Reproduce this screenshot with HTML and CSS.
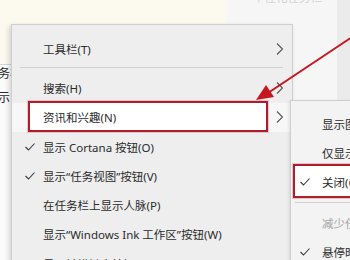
FILE: index.html
```html
<!DOCTYPE html>
<html>
<head>
<meta charset="utf-8">
<link rel="stylesheet" href="styles.css">
</head>
<body>

<div class="desk">
  <div class="pane-left">
    <div class="strip">
      <p class="cut">务栏</p>
      <p class="cut">示</p>
    </div>
  </div>
  <div class="pane-right">
    <p class="faint">个性化任务栏</p>
  </div>
  <div class="pane-edge"></div>
</div>

<!-- context menu -->
<div class="menu main">
  <div class="item"><span class="tick"></span><span class="label">工具栏(T)</span><svg class="arrow" width="7" height="12" viewBox="0 0 7 12"><polyline points="1,0.5 6.5,6 1,11.5"/></svg></div>
  <div class="sep"></div>
  <div class="item"><span class="tick"></span><span class="label">搜索(H)</span><svg class="arrow" width="7" height="12" viewBox="0 0 7 12"><polyline points="1,0.5 6.5,6 1,11.5"/></svg></div>
  <div class="item hot mark"><span class="tick"></span><span class="label">资讯和兴趣(N)</span><svg class="arrow" width="7" height="12" viewBox="0 0 7 12"><polyline points="1,0.5 6.5,6 1,11.5"/></svg></div>
  <div class="item"><span class="tick"><svg width="10" height="8" viewBox="0 0 10 8"><polyline points="0.5,4 3.5,7 9.5,0.5"/></svg></span><span class="label">显示 Cortana 按钮(O)</span></div>
  <div class="item"><span class="tick"><svg width="10" height="8" viewBox="0 0 10 8"><polyline points="0.5,4 3.5,7 9.5,0.5"/></svg></span><span class="label">显示“任务视图”按钮(V)</span></div>
  <div class="item"><span class="tick"></span><span class="label">在任务栏上显示人脉(P)</span></div>
  <div class="item"><span class="tick"></span><span class="label">显示“Windows Ink 工作区”按钮(W)</span></div>
  <div class="item"><span class="tick"></span><span class="label">显示触摸键盘按钮(Y)</span></div>
</div>

<!-- submenu -->
<div class="menu sub">
  <div class="item"><span class="tick"></span><span class="label">显示图标和文本(S)</span></div>
  <div class="item"><span class="tick"></span><span class="label">仅显示图标(I)</span></div>
  <div class="item mark"><span class="tick"><svg width="10" height="8" viewBox="0 0 10 8"><polyline points="0.5,4 3.5,7 9.5,0.5"/></svg></span><span class="label">关闭(O)</span></div>
  <div class="sep"></div>
  <div class="item off"><span class="tick"></span><span class="label">减少任务栏更新(R)</span></div>
  <div class="item"><span class="tick"><svg width="10" height="8" viewBox="0 0 10 8"><polyline points="0.5,4 3.5,7 9.5,0.5"/></svg></span><span class="label">悬停时打开(H)</span></div>
</div>

<!-- red pointer -->
<svg class="pointer" width="350" height="260" viewBox="0 0 350 260">
  <line x1="352" y1="37" x2="268" y2="93" class="shaft"/>
  <polygon points="256,100 266,85 274,97" class="head"/>
</svg>

</body>
</html>
```

FILE: styles.css
```css
body {
  margin: 0;
  width: 350px;
  height: 260px;
  overflow: hidden;
  font-family: "Noto Sans", "Noto Sans CJK SC", sans-serif;
  font-size: 11.5px;
  color: #2b2b2b;
}

.desk {
  display: grid;
  grid-template-columns: 227px 110px 13px;
  height: 260px;
}

.pane-left {
  background: #fcfaef;
  padding-top: 64px;
}

.strip {
  background: #fbfbfb;
  border-top: 1px solid #d6d6d6;
  height: 100%;
  padding-top: 1px;
}

.cut {
  margin: 0 0 0 -2px;
  height: 24px;
  line-height: 16px;
  font-size: 12px;
  color: #2a2a2a;
}

.pane-right {
  background: #f6f6f6;
}

.faint {
  margin: -9px 0 0 26px;
  color: #d2d2d2;
  line-height: 14px;
}

.pane-edge {
  background: #ebebeb;
}

/* menus */

.menu {
  position: absolute;
  background: #eeeeee;
  border: 1px solid #cfcfcf;
}

.main {
  left: 11px;
  top: 24px;
  width: 280px;
  height: 260px;
  padding-top: 9px;
  box-shadow: -2px 2px 5px rgba(0, 0, 0, 0.16);
}

.sub {
  left: 290px;
  top: 100px;
  width: 90px;
  height: 180px;
  padding-top: 8px;
  background: #f3f3f3;
  box-shadow: -1px 1px 3px rgba(0, 0, 0, 0.1);
}

.item {
  position: relative;
  display: flex;
  align-items: center;
  height: 29.3px;
  white-space: nowrap;
}

.tick {
  width: 31px;
  flex: none;
  box-sizing: border-box;
  padding-left: 13px;
  display: flex;
  align-items: center;
}

.sub .tick {
  padding-left: 9px;
}

.tick svg polyline {
  fill: none;
  stroke: #3a3a3a;
  stroke-width: 1.1;
}

.label {
  flex: 1;
}

.arrow {
  margin-right: 9px;
}

.arrow polyline {
  fill: none;
  stroke: #555;
  stroke-width: 1.1;
}

.sep {
  height: 1px;
  background: #d0d0d0;
  margin: 4px 9px 5px 8px;
}

.sub .sep {
  margin: 5px 0 5px 4px;
}

.hot {
  background: #f7f7f7;
}

.off .label {
  color: #a6a6a6;
}

.mark {
  z-index: 0;
}

.mark::before {
  content: "";
  position: absolute;
  z-index: -1;
  background: #ffffff;
  border: 2px solid #ad1f2c;
  box-shadow: 0 0 0 1px rgba(210, 110, 120, 0.35);
}

.main .mark::before {
  left: 16px;
  right: 24px;
  top: -2px;
  bottom: 0;
}

.sub .mark::before {
  left: 2px;
  right: -10px;
  top: -4px;
  bottom: -1px;
}

/* annotation arrow */

.pointer {
  position: absolute;
  left: 0;
  top: 0;
  pointer-events: none;
}

.shaft {
  stroke: #c8161f;
  stroke-width: 2;
}

.head {
  fill: #c8161f;
}
```
